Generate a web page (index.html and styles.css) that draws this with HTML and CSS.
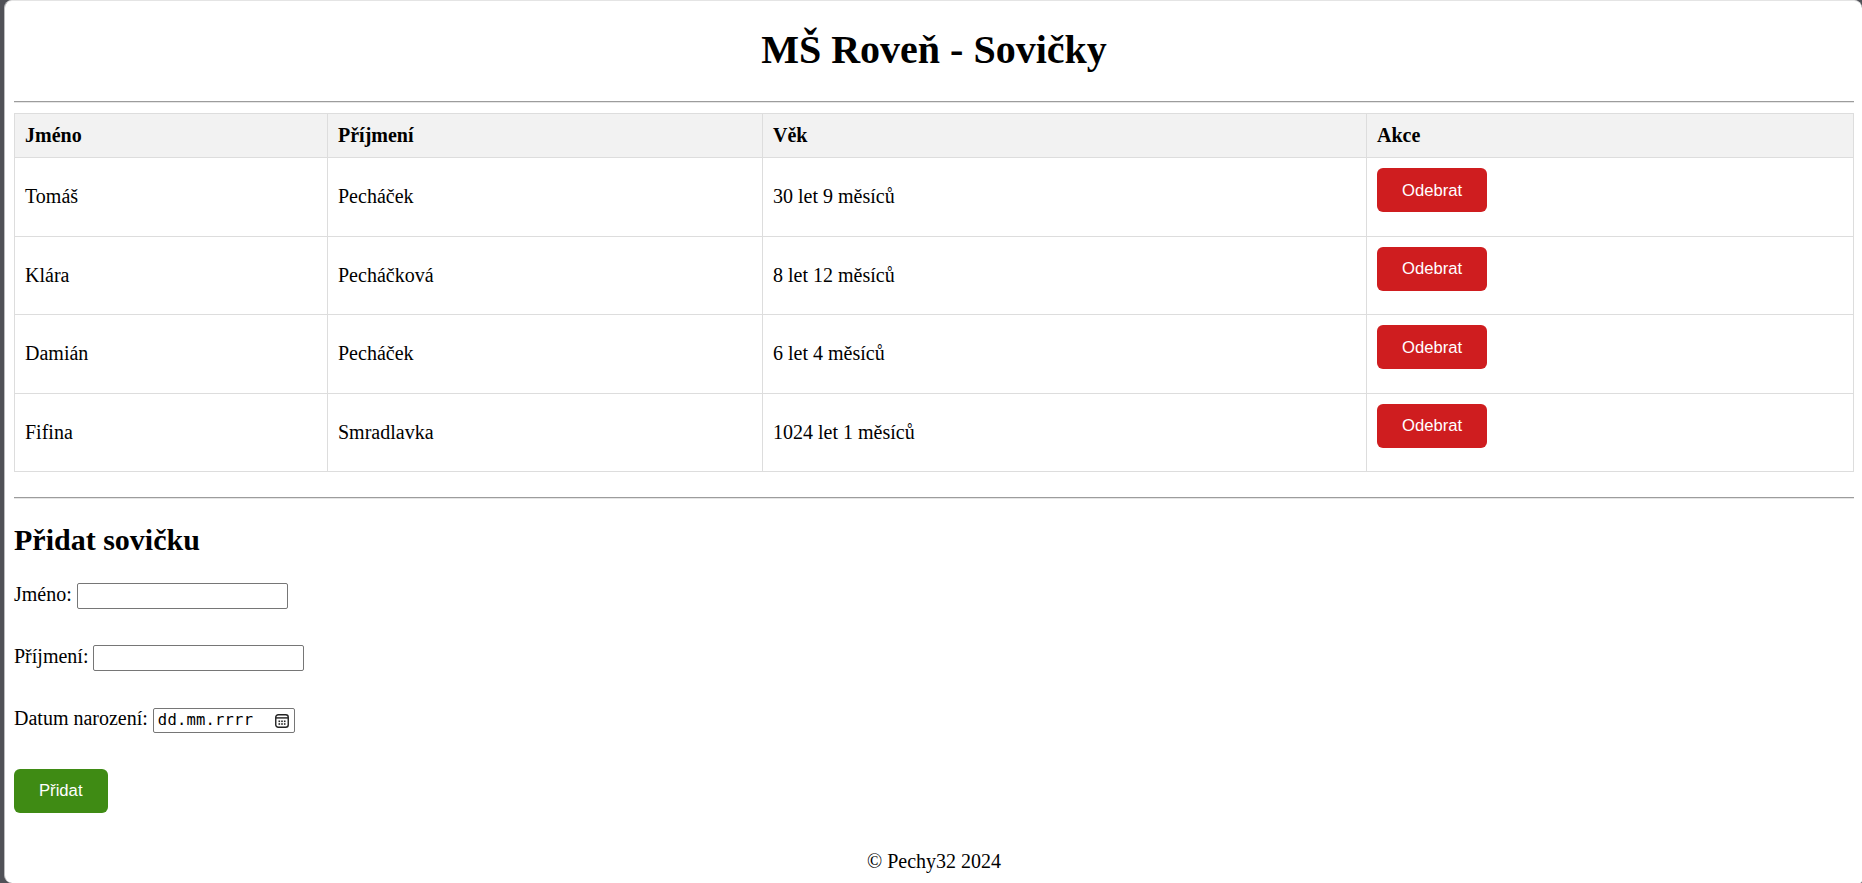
FILE: index.html
```html
<!DOCTYPE html>
<html lang="cs">
<head>
<meta charset="utf-8">
<title>MŠ Roveň - Sovičky</title>
<link rel="stylesheet" href="styles.css">
</head>
<body>
<div class="window">
  <h1 class="title">MŠ Roveň - Sovičky</h1>
  <hr class="rule rule-top">
  <table class="owls">
    <colgroup>
      <col class="col-name">
      <col class="col-surname">
      <col class="col-age">
      <col class="col-action">
    </colgroup>
    <thead>
      <tr><th>Jméno</th><th>Příjmení</th><th>Věk</th><th>Akce</th></tr>
    </thead>
    <tbody>
      <tr><td>Tomáš</td><td>Pecháček</td><td>30 let 9 měsíců</td><td class="action"><button class="btn btn-remove" type="button">Odebrat</button></td></tr>
      <tr><td>Klára</td><td>Pecháčková</td><td>8 let 12 měsíců</td><td class="action"><button class="btn btn-remove" type="button">Odebrat</button></td></tr>
      <tr><td>Damián</td><td>Pecháček</td><td>6 let 4 měsíců</td><td class="action"><button class="btn btn-remove" type="button">Odebrat</button></td></tr>
      <tr><td>Fifina</td><td>Smradlavka</td><td>1024 let 1 měsíců</td><td class="action"><button class="btn btn-remove" type="button">Odebrat</button></td></tr>
    </tbody>
  </table>
  <hr class="rule rule-bottom">
  <h2 class="subtitle">Přidat sovičku</h2>
  <form class="add-form">
    <div class="field"><label class="label">Jméno:</label> <input class="text-input" type="text"></div>
    <div class="field"><label class="label">Příjmení:</label> <input class="text-input" type="text"></div>
    <div class="field"><label class="label">Datum narození:</label> <span class="date-input"><span class="date-text">dd.mm.rrrr</span><svg class="cal-icon" width="14" height="14" viewBox="0 0 14 14"><rect x="0.75" y="0.75" width="12.5" height="12.5" rx="2.5" fill="none" stroke="#222" stroke-width="1.4"/><rect x="1" y="3.2" width="12" height="1.4" fill="#222"/><rect x="3.5" y="6.5" width="1.6" height="1.6" fill="#222"/><rect x="6.2" y="6.5" width="1.6" height="1.6" fill="#222"/><rect x="8.9" y="6.5" width="1.6" height="1.6" fill="#222"/><rect x="3.5" y="9.2" width="1.6" height="1.6" fill="#222"/><rect x="6.2" y="9.2" width="1.6" height="1.6" fill="#222"/><rect x="8.9" y="9.2" width="1.6" height="1.6" fill="#222"/></svg></span></div>
    <button class="btn btn-add" type="button">Přidat</button>
  </form>
  <footer class="footer">© Pechy32 2024</footer>
</div>
</body>
</html>
```
FILE: styles.css
```css
html {
  background: #505157;
  height: 100%;
  overflow: hidden;
}
body {
  margin: 0;
  height: 100%;
  font-family: "Liberation Serif", "Times New Roman", serif;
  font-size: 20px;
  line-height: 23px;
  color: #000;
}
.window {
  box-sizing: border-box;
  margin-left: 4px;
  min-height: 100%;
  background: #fff;
  border-top: 1px solid #e4e4e4;
  border-left: 1px solid #bdbdbf;
  border-radius: 8px 8px 2px 8px;
  padding: 0 8px 0 9px;
  overflow: hidden;
}
.title {
  margin: 26px 0 0;
  font-size: 40px;
  line-height: 46px;
  font-weight: bold;
  text-align: center;
}
.rule {
  height: 0;
  border: 0;
  border-top: 1px solid #9c9c9c;
  border-bottom: 1px solid #e6e6e6;
  margin: 0;
}
.rule-top {
  margin-top: 28px;
}
.owls {
  width: 100%;
  margin-top: 10px;
  border-collapse: collapse;
  table-layout: fixed;
}
.col-name { width: 313px; }
.col-surname { width: 435px; }
.col-age { width: 604px; }
.owls th,
.owls td {
  border: 1px solid #dddddd;
  padding: 10px;
  text-align: left;
  vertical-align: middle;
}
.owls th {
  background: #f2f2f2;
  font-weight: bold;
}
.btn {
  font-family: "Liberation Sans", Arial, sans-serif;
  font-size: 16.67px;
  line-height: 19px;
  color: #fff;
  border: none;
  border-radius: 6px;
  height: 44px;
  padding: 0 25px;
  cursor: pointer;
}
.btn-remove {
  display: block;
  background: #cf1d1f;
  margin-bottom: 13.5px;
}
.rule-bottom {
  margin-top: 25px;
}
.subtitle {
  margin: 24px 0 26px;
  font-size: 30px;
  line-height: 34px;
  font-weight: bold;
}
.field {
  margin-bottom: 36px;
}
.text-input {
  box-sizing: border-box;
  width: 211px;
  height: 26px;
  padding: 1px 2px;
  border: 1px solid #767676;
  border-radius: 2px;
  font-family: "Liberation Sans", Arial, sans-serif;
  font-size: 16.67px;
  vertical-align: baseline;
  margin: 0;
}
.date-input {
  box-sizing: border-box;
  display: inline-flex;
  align-items: center;
  justify-content: space-between;
  width: 142px;
  height: 25px;
  padding: 0 5px 0 4px;
  border: 1px solid #767676;
  border-radius: 2px;
  vertical-align: baseline;
}
.date-text {
  font-family: "DejaVu Sans Mono", "Liberation Mono", monospace;
  font-size: 15.5px;
  line-height: 18px;
  letter-spacing: 0.2px;
}
.cal-icon {
  display: block;
  margin-top: 1px;
}
.btn-add {
  display: block;
  margin-top: 1px;
  background: #3f8b14;
}
.footer {
  margin-top: 37px;
  text-align: center;
}
```
